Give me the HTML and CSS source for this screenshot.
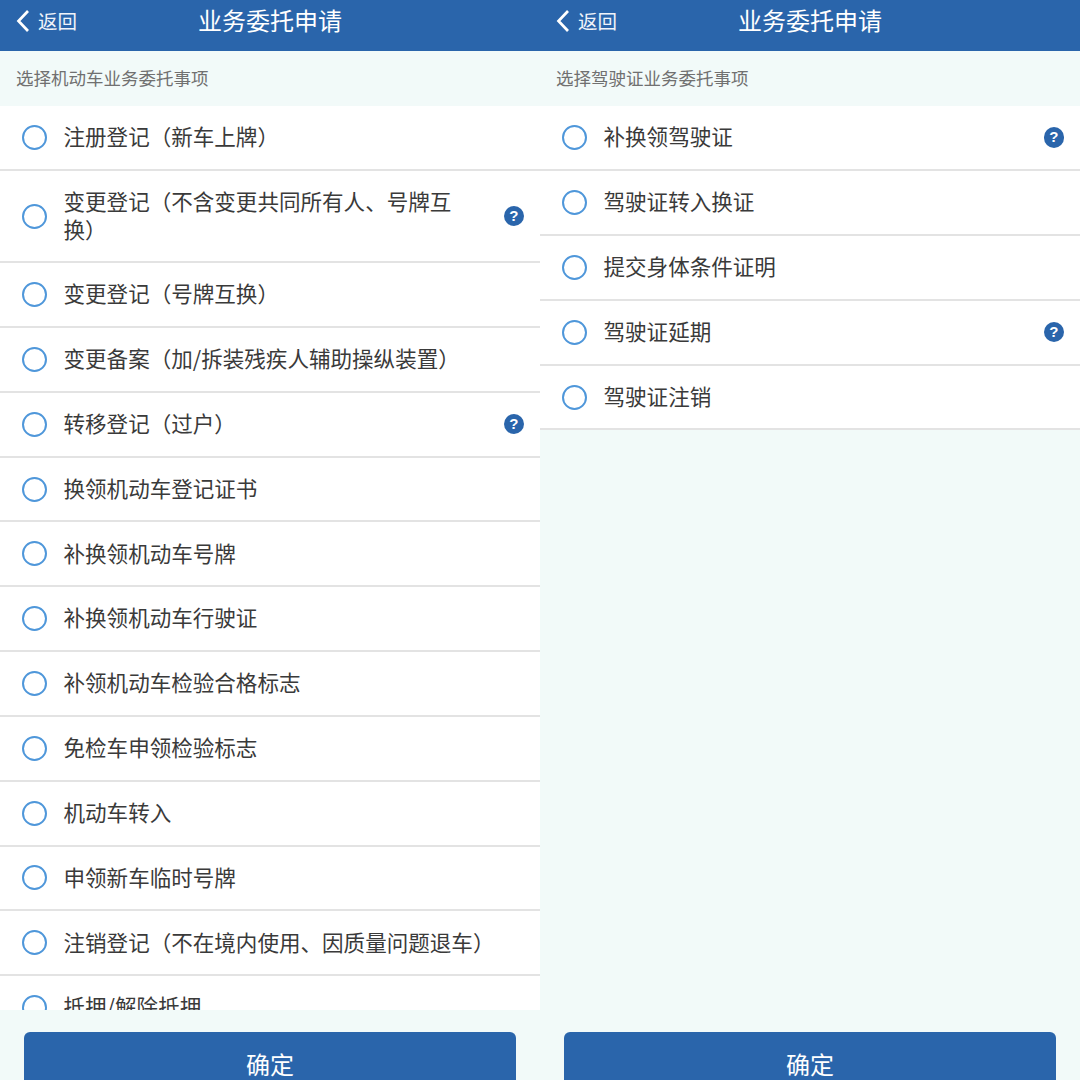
FILE: index.html
```html
<!DOCTYPE html>
<html lang="zh-CN">
<head>
<meta charset="utf-8">
<title>业务委托申请</title>
<link rel="stylesheet" href="styles.css">
</head>
<body>
<section class="panel">
  <header class="bar">
    <div class="back"><svg class="chev" viewBox="0 0 14 24"><path d="M12 2 2.5 12 12 22"/></svg><span>返回</span></div>
    <h1 class="title">业务委托申请</h1>
  </header>
  <p class="hint">选择机动车业务委托事项</p>
  <ul class="list">
    <li class="row"><i class="radio"></i><span class="label">注册登记（新车上牌）</span></li>
    <li class="row tall"><i class="radio"></i><span class="label">变更登记（不含变更共同所有人、号牌互换）</span><b class="help">?</b></li>
    <li class="row"><i class="radio"></i><span class="label">变更登记（号牌互换）</span></li>
    <li class="row"><i class="radio"></i><span class="label">变更备案（加/拆装残疾人辅助操纵装置）</span></li>
    <li class="row"><i class="radio"></i><span class="label">转移登记（过户）</span><b class="help">?</b></li>
    <li class="row"><i class="radio"></i><span class="label">换领机动车登记证书</span></li>
    <li class="row"><i class="radio"></i><span class="label">补换领机动车号牌</span></li>
    <li class="row"><i class="radio"></i><span class="label">补换领机动车行驶证</span></li>
    <li class="row"><i class="radio"></i><span class="label">补领机动车检验合格标志</span></li>
    <li class="row"><i class="radio"></i><span class="label">免检车申领检验标志</span></li>
    <li class="row"><i class="radio"></i><span class="label">机动车转入</span></li>
    <li class="row"><i class="radio"></i><span class="label">申领新车临时号牌</span></li>
    <li class="row"><i class="radio"></i><span class="label">注销登记（不在境内使用、因质量问题退车）</span></li>
    <li class="row"><i class="radio"></i><span class="label">抵押/解除抵押</span></li>
  </ul>
  <footer class="foot"><button class="ok">确定</button></footer>
</section>
<section class="panel">
  <header class="bar">
    <div class="back"><svg class="chev" viewBox="0 0 14 24"><path d="M12 2 2.5 12 12 22"/></svg><span>返回</span></div>
    <h1 class="title">业务委托申请</h1>
  </header>
  <p class="hint">选择驾驶证业务委托事项</p>
  <ul class="list">
    <li class="row"><i class="radio"></i><span class="label">补换领驾驶证</span><b class="help">?</b></li>
    <li class="row"><i class="radio"></i><span class="label">驾驶证转入换证</span></li>
    <li class="row"><i class="radio"></i><span class="label">提交身体条件证明</span></li>
    <li class="row"><i class="radio"></i><span class="label">驾驶证延期</span><b class="help">?</b></li>
    <li class="row"><i class="radio"></i><span class="label">驾驶证注销</span></li>
  </ul>
  <footer class="foot"><button class="ok">确定</button></footer>
</section>
</body>
</html>
```
FILE: styles.css
```css
* { box-sizing: border-box; }
html, body { margin: 0; height: 1080px; overflow: hidden; }
body {
  display: flex;
  font-family: "Noto Sans CJK SC", "Liberation Sans", sans-serif;
  background: #f2faf9;
  color: #333;
}
.panel {
  width: 540px;
  height: 1080px;
  display: flex;
  flex-direction: column;
  overflow: hidden;
  background: #f2faf9;
}
.bar {
  flex: none;
  height: 51px;
  background: #2a65ab;
  color: #fff;
  position: relative;
  display: flex;
  justify-content: center;
  align-items: center;
  padding-bottom: 11px;
}
.title { margin: 0; font-size: 24px; font-weight: 400; line-height: 30px; }
.back {
  position: absolute;
  left: 16px;
  top: 8px;
  display: flex;
  align-items: center;
  gap: 8px;
  font-size: 19.5px;
  line-height: 26px;
  color: #f0f4fa;
}
.chev { width: 14px; height: 24px; fill: none; stroke: #fff; stroke-width: 2.7; }
.hint {
  flex: none;
  height: 55.3px;
  margin: 0;
  padding: 0 16px 3px;
  display: flex;
  align-items: center;
  font-size: 17.5px;
  color: #707070;
}
.list {
  list-style: none;
  margin: 0;
  padding: 0;
  flex: 1;
  min-height: 0;
  overflow: hidden;
}
.panel:first-child .list { background: #fff; }
.row {
  height: 64.83px;
  display: flex;
  align-items: center;
  padding: 0 16px 0 22px;
  background: #fff;
  border-bottom: 2px solid #e3e3e3;
}
.tall { height: 92px; }
.radio {
  flex: none;
  width: 25px;
  height: 25px;
  border: 2px solid #4f97da;
  border-radius: 50%;
  margin-right: 17px;
}
.label {
  flex: 1;
  min-width: 0;
  padding-bottom: 2px;
  font-size: 21.55px;
  line-height: 28.5px;
  color: #3a3a3a;
  margin-left: -0.5px;
}
.help {
  flex: none;
  width: 20.5px;
  height: 20.5px;
  margin-left: 40px;
  border-radius: 50%;
  background: #2a65ab;
  color: #fff;
  font: 700 15px/20.5px "Liberation Sans", sans-serif;
  text-align: center;
}
.foot { flex: none; height: 69.7px; padding: 22px 24px 0; }
.ok {
  display: block;
  width: 100%;
  height: 66px;
  border: 0;
  border-radius: 6px;
  background: #2a65ab;
  color: #fff;
  font-family: inherit;
  font-size: 24px;
  padding: 0 0 4px;
}
```
